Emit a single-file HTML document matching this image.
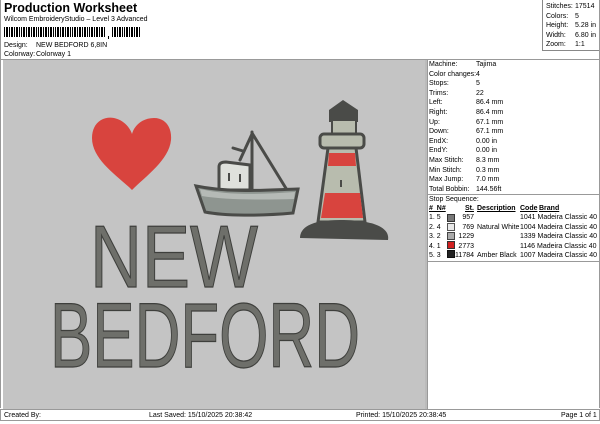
<!DOCTYPE html>
<html><head><style>
body{margin:0;width:600px;height:424px;background:#fff;font-family:"Liberation Sans",sans-serif;color:#000;position:relative;overflow:hidden}
.a{position:absolute}
.s{font-size:7px;line-height:9.6px}
</style></head><body>
<div class="a" style="left:4px;top:1px;font-size:12.5px;font-weight:bold">Production Worksheet</div>
<div class="a s" style="left:4px;top:15px">Wilcom EmbroideryStudio – Level 3 Advanced</div>
<svg class="a" style="left:4px;top:27px" width="138" height="12">
<g fill="#000">
<rect x="0" y="0" width="1" height="10"/><rect x="2" y="0" width="2" height="10"/><rect x="5" y="0" width="1" height="10"/><rect x="7" y="0" width="2" height="10"/><rect x="10" y="0" width="1" height="10"/><rect x="12" y="0" width="2" height="10"/><rect x="15" y="0" width="1" height="10"/><rect x="17" y="0" width="1" height="10"/><rect x="19" y="0" width="2" height="10"/><rect x="22" y="0" width="1" height="10"/><rect x="24" y="0" width="2" height="10"/><rect x="27" y="0" width="1" height="10"/><rect x="29" y="0" width="2" height="10"/><rect x="32" y="0" width="1" height="10"/><rect x="34" y="0" width="1" height="10"/><rect x="36" y="0" width="2" height="10"/><rect x="39" y="0" width="1" height="10"/><rect x="41" y="0" width="2" height="10"/><rect x="44" y="0" width="1" height="10"/><rect x="46" y="0" width="2" height="10"/><rect x="49" y="0" width="1" height="10"/><rect x="51" y="0" width="1" height="10"/><rect x="53" y="0" width="2" height="10"/><rect x="56" y="0" width="1" height="10"/><rect x="58" y="0" width="2" height="10"/><rect x="61" y="0" width="1" height="10"/><rect x="63" y="0" width="2" height="10"/><rect x="66" y="0" width="1" height="10"/><rect x="68" y="0" width="1" height="10"/><rect x="70" y="0" width="2" height="10"/><rect x="73" y="0" width="1" height="10"/><rect x="75" y="0" width="2" height="10"/><rect x="78" y="0" width="1" height="10"/><rect x="80" y="0" width="2" height="10"/><rect x="83" y="0" width="1" height="10"/><rect x="85" y="0" width="1" height="10"/><rect x="87" y="0" width="2" height="10"/><rect x="90" y="0" width="1" height="10"/><rect x="92" y="0" width="2" height="10"/><rect x="95" y="0" width="1" height="10"/><rect x="97" y="0" width="2" height="10"/><rect x="100" y="0" width="1" height="10"/>
<rect x="104" y="9" width="1" height="3"/>
<rect x="108" y="0" width="1" height="10"/><rect x="110" y="0" width="2" height="10"/><rect x="113" y="0" width="1" height="10"/><rect x="115" y="0" width="2" height="10"/><rect x="118" y="0" width="1" height="10"/><rect x="120" y="0" width="1" height="10"/><rect x="122" y="0" width="2" height="10"/><rect x="125" y="0" width="1" height="10"/><rect x="127" y="0" width="2" height="10"/><rect x="130" y="0" width="1" height="10"/><rect x="132" y="0" width="2" height="10"/><rect x="135" y="0" width="1" height="10"/>
</g></svg>
<div class="a s" style="left:4px;top:41px">Design:</div><div class="a s" style="left:36px;top:41px">NEW BEDFORD 6,8IN</div>
<div class="a s" style="left:4px;top:50px">Colorway:</div><div class="a s" style="left:36px;top:50px">Colorway 1</div>
<div class="a" style="left:542px;top:0;width:56px;height:50px;border:1px solid #888;border-top:none"></div>
<div class="a s" style="left:546px;top:2px">Stitches:<br>Colors:<br>Height:<br>Width:<br>Zoom:</div>
<div class="a s" style="left:575px;top:2px">17514<br>5<br>5.28 in<br>6.80 in<br>1:1</div>
<div class="a" style="left:0;top:0;width:598px;height:408px;border:1px solid #999;border-top:none;border-bottom:none"></div>
<div class="a" style="left:0;top:59px;width:600px;height:1px;background:#999"></div>
<div class="a" style="left:3px;top:60px;width:422px;height:349px;background:#c4c4c4"></div>
<div class="a" style="left:425px;top:60px;width:2px;height:349px;background:#bbb"></div>
<div class="a" style="left:427px;top:60px;width:1px;height:349px;background:#999"></div>
<svg class="a" style="left:3px;top:60px" width="422" height="349">
<g transform="translate(-3,-60)">
<path d="M132,190 C118,176 92,160 92,138 C92,122 104,116 114,118 C124,120 130,128 132,134 C134,126 142,118 154,118 C166,118 172,128 171,140 C169,160 146,176 132,190Z" fill="#d8443e"/>
<!-- boat -->
<path d="M252,190 L252,132 M252,133 L287,190 M252,134 L240,160 M233,148 L243,151" stroke="#4a4b48" stroke-width="3" fill="none" stroke-linecap="round"/>
<path d="M219,167 C219,163 222,162 226,162 L250,165 L250,190 L219,190Z" fill="#dfe1dc" stroke="#4a4b48" stroke-width="3"/>
<rect x="228" y="173" width="2" height="8" fill="#4a4b48"/><rect x="239" y="174" width="2" height="8" fill="#4a4b48"/>
<path d="M196,186 C230,193 265,190 298,189 L293,213 C260,216 225,216 205,212Z" fill="#8e9590" stroke="#4a4b48" stroke-width="3"/>
<path d="M200,189 C230,196 265,194 295,192 L294,199 C262,200 225,200 202,196Z" fill="#b5bab6"/>
<!-- lighthouse -->
<path d="M329,122 L329,110 L343,100 L358,110 L358,122Z" fill="#4a4b48"/>
<rect x="332" y="120" width="24" height="14" fill="#b8bcae" stroke="#4a4b48" stroke-width="2"/>
<rect x="320" y="134" width="44" height="14" rx="4" fill="#b8bcae" stroke="#4a4b48" stroke-width="3"/>
<path d="M328,148 L356,148 L365,222 L318,222Z" fill="#b8bcae" stroke="#4a4b48" stroke-width="3"/>
<path d="M329,153 L355,153 L356,166 L328,166Z" fill="#d8443e"/>
<path d="M325,193 L360,193 L363,218 L321,218Z" fill="#d8443e"/>
<rect x="340" y="180" width="2" height="7" fill="#4a4b48"/>
<path d="M300,238 C300,228 310,220 340,220 C375,220 390,228 388,240Z" fill="#4a4b48"/>
</g>
<g font-family="Liberation Sans,sans-serif" fill="#6e6f6a" stroke="#3e3f3c" stroke-width="1.2">
<text x="87" y="227" font-size="88" textLength="168" lengthAdjust="spacingAndGlyphs">NEW</text>
<text x="47" y="307" font-size="92" textLength="310" lengthAdjust="spacingAndGlyphs">BEDFORD</text>
</g>
</svg>
<div class="a s" style="left:429px;top:60px">Machine:<br>Color changes:<br>Stops:<br>Trims:<br>Left:<br>Right:<br>Up:<br>Down:<br>EndX:<br>EndY:<br>Max Stitch:<br>Min Stitch:<br>Max Jump:<br>Total Bobbin:</div>
<div class="a s" style="left:476px;top:60px">Tajima<br>4<br>5<br>22<br>86.4 mm<br>86.4 mm<br>67.1 mm<br>67.1 mm<br>0.00 in<br>0.00 in<br>8.3 mm<br>0.3 mm<br>7.0 mm<br>144.56ft</div>
<div class="a" style="left:427px;top:194px;width:172px;height:1px;background:#999"></div>
<div class="a s" style="left:429px;top:195px">Stop Sequence:</div>
<div class="a s" style="left:429px;top:204px;font-weight:bold;text-decoration:underline">#&nbsp;&nbsp;N#</div>
<div class="a s" style="left:465px;top:204px;font-weight:bold;text-decoration:underline">St.</div>
<div class="a s" style="left:477px;top:204px;font-weight:bold;text-decoration:underline">Description</div>
<div class="a s" style="left:520px;top:204px;font-weight:bold;text-decoration:underline">Code</div>
<div class="a s" style="left:539px;top:204px;font-weight:bold;text-decoration:underline">Brand</div>
<div class="a s" style="left:429px;top:213px">1. 5<br>2. 4<br>3. 2<br>4. 1<br>5. 3</div>
<div class="a" style="left:447px;top:214px;width:6px;height:6px;background:#777;border:1px solid #333"></div>
<div class="a" style="left:447px;top:223px;width:6px;height:6px;background:#e8e8e8;border:1px solid #555"></div>
<div class="a" style="left:447px;top:232px;width:6px;height:6px;background:#aaa;border:1px solid #444"></div>
<div class="a" style="left:447px;top:241px;width:6px;height:6px;background:#d02020;border:1px solid #333"></div>
<div class="a" style="left:447px;top:250px;width:6px;height:6px;background:#222;border:1px solid #111"></div>
<div class="a s" style="left:455px;top:213px;width:19px;text-align:right">957<br>769<br>1229<br>2773<br>11784</div>
<div class="a s" style="left:477px;top:213px"><br>Natural White<br><br><br>Amber Black</div>
<div class="a s" style="left:520px;top:213px">1041 Madeira Classic 40<br>1004 Madeira Classic 40<br>1339 Madeira Classic 40<br>1146 Madeira Classic 40<br>1007 Madeira Classic 40</div>
<div class="a" style="left:427px;top:261px;width:172px;height:1px;background:#999"></div>
<div class="a" style="left:0;top:409px;width:600px;height:12px;border:1px solid #999;box-sizing:border-box"></div>
<div class="a s" style="left:4px;top:411px">Created By:</div>
<div class="a s" style="left:149px;top:411px">Last Saved: 15/10/2025 20:38:42</div>
<div class="a s" style="left:356px;top:411px">Printed: 15/10/2025 20:38:45</div>
<div class="a s" style="left:561px;top:411px">Page 1 of 1</div>
</body></html>
